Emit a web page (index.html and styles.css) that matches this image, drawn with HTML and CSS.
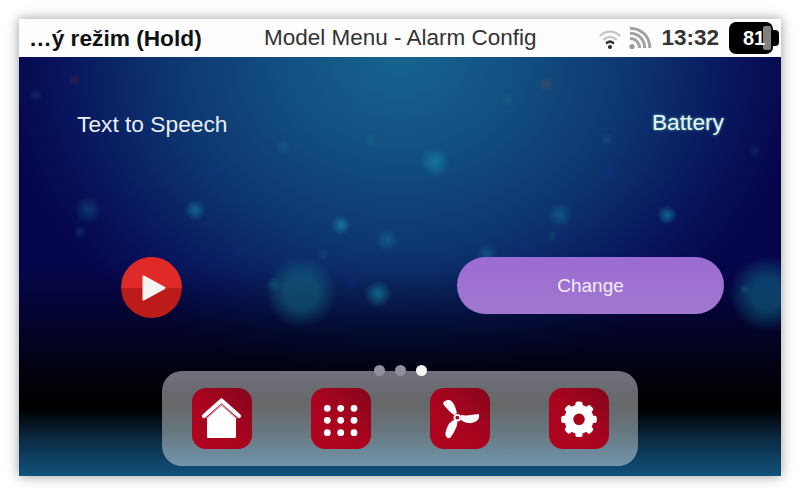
FILE: index.html
```html
<!DOCTYPE html>
<html lang="en">
<head>
<meta charset="utf-8">
<title>Model Menu - Alarm Config</title>
<link rel="stylesheet" href="styles.css">
</head>
<body>
<div class="window">
  <header class="topbar">
    <div class="mode">…ý režim (Hold)</div>
    <div class="title">Model Menu - Alarm Config</div>
    <div class="status">
      <svg class="st-icon wifi" viewBox="0 0 24 24" width="24" height="24" fill="none" stroke="#c4c4c4" stroke-linecap="round">
        <path d="M2.500 9.500C8 4.300 16 4.300 21.500 9.500" stroke-width="2.400"/>
        <path d="M6 13.300C9.500 10 14.500 10 18 13.300" stroke-width="2.400"/>
        <path d="M9 16.800C10.800 15.300 13.200 15.300 15 16.800" stroke-width="2.600" stroke="#333"/>
        <circle cx="12" cy="21" r="2.100" fill="#2e2e2e" stroke="none"/>
      </svg>
      <svg class="st-icon rss" viewBox="0 0 24 24" width="24" height="24" fill="none" stroke="#a2a2a2" stroke-width="3">
        <circle cx="4" cy="20.500" r="2.600" fill="#999" stroke="none"/>
        <path d="M2 12.500C7.500 12.500 11.500 16.500 11.500 22"/>
        <path d="M2 7.300C10.500 7.300 16.700 13.500 16.700 22"/>
        <path d="M2 2.200C13.500 2.200 21.800 10.500 21.800 22"/>
      </svg>
      <span class="clock">13:32</span>
      <div class="battery">
        <span class="batt-level"></span>
        <span class="batt-num">81</span>
      </div>
    </div>
  </header>
  <main class="screen">
    <section class="panes">
      <div class="pane pane-left">
        <h2 class="label">Text to Speech</h2>
        <button class="play" aria-label="Play">
          <svg viewBox="0 0 26 28" width="26" height="28"><path d="M2.500 2.500 L23.500 14 L2.500 25.500 Z" fill="#f4f4f4" stroke="#f4f4f4" stroke-width="2" stroke-linejoin="round"/></svg>
        </button>
      </div>
      <div class="pane pane-right">
        <h2 class="label label-glow">Battery</h2>
        <button class="change">Change</button>
      </div>
    </section>
    <div class="pager">
      <span class="dot"></span><span class="dot"></span><span class="dot dot-on"></span>
    </div>
    <nav class="dock">
      <a class="tile">
        <svg viewBox="0 0 61 61" width="61" height="61">
          <path d="M15 30 L29.500 16 L44 30 V48.500 Q44 50 42.500 50 H16.500 Q15 50 15 48.500 Z" fill="#fff"/>
          <path d="M14.500 30.500 L29.500 17 L44.500 30.500" fill="none" stroke="#dc9aa6" stroke-width="1.100"/>
          <path d="M12 28 L29.500 12.500 L47 28" fill="none" stroke="#fff" stroke-width="4.200" stroke-linecap="round" stroke-linejoin="round"/>
        </svg>
      </a>
      <a class="tile">
        <svg viewBox="0 0 61 61" width="61" height="61" fill="#fff">
          <circle cx="16.300" cy="20.300" r="3.400"/><circle cx="29.700" cy="20.300" r="3.400"/><circle cx="43" cy="20.300" r="3.400"/>
          <circle cx="16.300" cy="32.300" r="3.400"/><circle cx="29.700" cy="32.300" r="3.400"/><circle cx="43" cy="32.300" r="3.400"/>
          <circle cx="16.300" cy="44.700" r="3.400"/><circle cx="29.700" cy="44.700" r="3.400"/><circle cx="43" cy="44.700" r="3.400"/>
        </svg>
      </a>
      <a class="tile">
        <svg viewBox="0 0 61 61" width="61" height="61" fill="#fff">
          <path d="M13.300 14.500 C14.500 12.500 18 11.500 20.500 12.500 C23.500 14 25.500 19 27 25 L24 27 C22 25.500 20 24 18.300 22 C16 19.500 12.500 16.500 13.300 14.500 Z"/>
          <path d="M31 27 C34 27.500 38 27.500 41 27 C44 26.500 47 26 49 26.300 C49.500 28.500 49 31 47.500 32.300 C45 34.500 41.500 35.500 38 35 C35 34.500 33 33.500 31 32 Z"/>
          <path d="M24.300 32 L27.300 33.500 C27.500 36.500 26.500 39.500 25 42 C23.500 45 21.500 49 19.300 50.300 C17.500 50.300 16 49 15.500 47 C15 44.500 16.500 40.500 18.300 37 C19.500 34.500 22 33 24.300 32 Z"/>
          <circle cx="27.300" cy="29.700" r="3.800"/>
          <circle cx="27.300" cy="29.700" r="1.900" fill="#a50a22"/>
        </svg>
      </a>
      <a class="tile">
        <svg viewBox="0 0 61 61" width="61" height="61" fill="#fff">
          <g transform="translate(30 31.300)">
            <circle r="10.200" fill="none" stroke="#fff" stroke-width="8.800"/>
            <rect x="-3.600" y="-17.800" width="7.200" height="7" rx="2.200"/>
            <rect x="-3.600" y="-17.800" width="7.200" height="7" rx="2.200" transform="rotate(45)"/>
            <rect x="-3.600" y="-17.800" width="7.200" height="7" rx="2.200" transform="rotate(90)"/>
            <rect x="-3.600" y="-17.800" width="7.200" height="7" rx="2.200" transform="rotate(135)"/>
            <rect x="-3.600" y="-17.800" width="7.200" height="7" rx="2.200" transform="rotate(180)"/>
            <rect x="-3.600" y="-17.800" width="7.200" height="7" rx="2.200" transform="rotate(225)"/>
            <rect x="-3.600" y="-17.800" width="7.200" height="7" rx="2.200" transform="rotate(270)"/>
            <rect x="-3.600" y="-17.800" width="7.200" height="7" rx="2.200" transform="rotate(315)"/>
          </g>
        </svg>
      </a>
    </nav>
  </main>
</div>
</body>
</html>
```

FILE: styles.css
```css
* { box-sizing: border-box; }
html, body { margin: 0; height: 100%; background: #fff; }
body {
  padding: 19px;
  font-family: "Liberation Sans", Arial, sans-serif;
  overflow: hidden;
}
.window {
  width: 762px;
  height: 457px;
  display: flex;
  flex-direction: column;
  box-shadow: 0 0 12px rgba(0, 0, 0, 0.4);
}
.topbar {
  height: 38px;
  flex: none;
  background: #fdfdfd;
  display: flex;
  align-items: center;
  padding: 0 2px 0 10px;
  color: #111;
}
.mode {
  width: 235px;
  font-size: 22.700px;
  font-weight: 700;
  color: #111;
  white-space: nowrap;
}
.title {
  font-size: 22.500px;
  color: #333;
  white-space: nowrap;
}
.status {
  margin-left: auto;
  display: flex;
  align-items: center;
}
.st-icon { display: block; }
.wifi { margin-right: 6px; }
.rss { margin-right: 9px; }
.clock {
  font-size: 22.500px;
  font-weight: 700;
  color: #333;
  margin-right: 10px;
}
.battery {
  position: relative;
  width: 50px;
  height: 32px;
}
.battery::before {
  content: "";
  position: absolute;
  left: 0; top: 0;
  width: 44px;
  height: 32px;
  background: #000;
  border-radius: 7px;
}
.battery::after {
  content: "";
  position: absolute;
  right: 0; top: 8px;
  width: 8px;
  height: 16px;
  background: #000;
  border-radius: 0 4px 4px 0;
}
.batt-num {
  position: absolute;
  z-index: 1;
  left: 14px;
  top: 5px;
  font-size: 20px;
  font-weight: 700;
  color: #fff;
}
.batt-level {
  position: absolute;
  z-index: 1;
  left: 34px;
  top: 4px;
  width: 8px;
  height: 24px;
  background: #808080;
  border-radius: 2px;
}
.screen {
  position: relative;
  flex: 1;
  background:
    radial-gradient(circle 14px at 69px 153px, rgba(25,135,155,.33), transparent),
    radial-gradient(circle 11px at 176px 153px, rgba(25,160,175,.5), transparent),
    radial-gradient(circle 10px at 322px 168px, rgba(25,165,185,.55), transparent),
    radial-gradient(circle 12px at 368px 183px, rgba(25,135,165,.4), transparent),
    radial-gradient(circle 14px at 359px 237px, rgba(20,160,180,.55), transparent),
    radial-gradient(circle 36px at 282px 235px, rgba(20,115,135,.5) 45%, transparent),
    radial-gradient(circle 8px at 255px 228px, rgba(25,135,155,.35), transparent),
    radial-gradient(circle 8px at 264px 90px, rgba(25,135,155,.25), transparent),
    radial-gradient(circle 7px at 351px 83px, rgba(25,135,155,.25), transparent),
    radial-gradient(circle 7px at 304px 198px, rgba(25,135,155,.2), transparent),
    radial-gradient(circle 7px at 61px 175px, rgba(25,120,150,.25), transparent),
    radial-gradient(circle 7px at 17px 38px, rgba(25,120,140,.25), transparent),
    radial-gradient(circle 7px at 55px 23px, rgba(130,35,70,.3), transparent),
    radial-gradient(circle 8px at 201px 112px, rgba(20,50,150,.3), transparent),
    radial-gradient(circle 8px at 320px 130px, rgba(20,60,150,.3), transparent),
    radial-gradient(circle 8px at 332px 225px, rgba(20,50,150,.3), transparent),
    radial-gradient(circle 8px at 220px 193px, rgba(20,50,140,.25), transparent),
    radial-gradient(circle 15px at 416px 105px, rgba(20,160,180,.5), transparent),
    radial-gradient(circle 13px at 541px 158px, rgba(25,140,160,.4), transparent),
    radial-gradient(circle 10px at 648px 158px, rgba(25,165,190,.55), transparent),
    radial-gradient(circle 11px at 468px 197px, rgba(25,140,160,.35), transparent),
    radial-gradient(circle 38px at 748px 237px, rgba(15,110,140,.55) 40%, transparent),
    radial-gradient(circle 6px at 726px 232px, rgba(25,135,155,.3), transparent),
    radial-gradient(circle 8px at 527px 27px, rgba(130,70,60,.35), transparent),
    radial-gradient(circle 7px at 488px 43px, rgba(25,120,140,.25), transparent),
    radial-gradient(circle 7px at 588px 82px, rgba(25,120,140,.25), transparent),
    radial-gradient(circle 7px at 736px 94px, rgba(25,110,140,.25), transparent),
    radial-gradient(circle 6px at 533px 179px, rgba(25,120,140,.25), transparent),
    radial-gradient(circle 9px at 508px 190px, rgba(20,50,150,.3), transparent),
    radial-gradient(circle 7px at 588px 115px, rgba(20,50,150,.3), transparent),
    linear-gradient(to bottom, transparent 0, transparent 50%, #000 82%, #000 84%, #0b2f48 92%, #12527c 100%),
    radial-gradient(ellipse 400px 330px at 50% 0, #16648f 0%, #124f80 30%, #0d3670 58%, #07145c 85%, #06064c 100%);
}
.panes {
  display: flex;
  justify-content: space-between;
  padding: 53px 57px 0 58px;
}
.pane {
  display: flex;
  flex-direction: column;
}
.pane-left { width: 170px; align-items: flex-start; }
.pane-right { width: 267px; align-items: flex-end; }
.label {
  margin: 0;
  font-size: 22.750px;
  line-height: 28px;
  font-weight: 400;
  color: #e9eef6;
  white-space: nowrap;
}
.label-glow {
  margin-top: -2px;
  color: #e6f6f0;
  text-shadow: 0 0 3px rgba(120, 230, 220, 0.7);
}
.play {
  width: 61px;
  height: 61px;
  margin-top: 119px;
  margin-left: 44px;
  padding: 0 0 0 4px;
  border: 0;
  border-radius: 50%;
  background: linear-gradient(#e02a27 0, #e02a27 50%, #bb1c1a 50%, #bb1c1a 100%);
  display: flex;
  align-items: center;
  justify-content: center;
}
.change {
  width: 267px;
  height: 57px;
  margin-top: 121px;
  border: 0;
  border-radius: 29px;
  background: linear-gradient(#9c6bd3, #a078cf);
  color: #f3edfb;
  font: 400 19px "Liberation Sans", Arial, sans-serif;
}
.pager {
  position: absolute;
  left: 354.500px;
  top: 308px;
  z-index: 1;
  display: flex;
  gap: 10px;
}
.dot {
  width: 11px;
  height: 11px;
  border-radius: 50%;
  background: #8f909c;
}
.dot-on { background: #f6f6f6; }
.dock {
  position: absolute;
  left: 143px;
  bottom: 10px;
  width: 476px;
  height: 95px;
  border-radius: 20px;
  background: linear-gradient(#6f707c 0, #666769 35%, #67787f 65%, #7195ae 100%);
  display: flex;
  gap: 59px;
  align-items: flex-start;
  padding: 17px 0 0 30px;
}
.tile {
  width: 60px;
  height: 61px;
  flex: none;
  border-radius: 14px;
  background: linear-gradient(45deg, #b10320 0%, #a8041e 50%, #84061c 100%);
  display: block;
}
.tile svg { display: block; }
```
